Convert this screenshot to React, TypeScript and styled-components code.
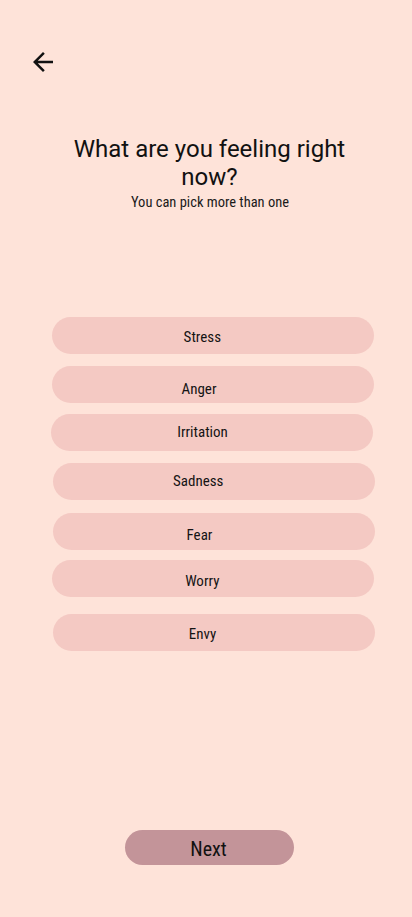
import React from "react";
import styled, { createGlobalStyle } from "styled-components";

const GlobalStyle = createGlobalStyle`
  html, body {
    margin: 0;
    padding: 0;
    background: #fee3d9;
  }
  * { box-sizing: border-box; }
`;

const condensed = `"Roboto Condensed", "Liberation Sans Narrow", "DejaVu Sans Condensed", Roboto, sans-serif`;

const Page = styled.div`
  width: 412px;
  height: 917px;
  background: #fee3d9;
  display: flex;
  flex-direction: column;
  font-family: Roboto, "Liberation Sans", sans-serif;
  color: #111;
  overflow: hidden;
`;

const TopBar = styled.div`
  padding: 47px 0 0 28px;
  height: 77px;
`;

const BackButton = styled.button`
  width: 30px;
  height: 30px;
  padding: 0;
  border: none;
  background: transparent;
  display: flex;
  cursor: pointer;
  svg { display: block; }
`;

const Title = styled.h1`
  margin: 58px 0 0;
  padding: 0 60px 0 67px;
  font-size: 24px;
  line-height: 28px;
  font-weight: 400;
  text-align: center;
  color: #111;
`;

const Subtitle = styled.p`
  margin: 4px 0 0;
  padding-left: 8px;
  font-family: ${condensed};
  font-size: 14.5px;
  line-height: 16px;
  text-align: center;
  color: #1a1a1a;
`;

const OptionList = styled.div`
  margin-top: 106px;
  padding-left: 52px;
  display: flex;
  flex-direction: column;
  align-items: flex-start;
`;

const Option = styled.button<{ $gap: number; $x: number }>`
  margin-top: ${(p) => p.$gap}px;
  margin-left: ${(p) => p.$x}px;
  width: 322px;
  height: 37px;
  border: none;
  border-radius: 19px;
  background: #f4c9c3;
  display: flex;
  align-items: center;
  justify-content: center;
  padding: 0;
  font-family: ${condensed};
  font-size: 15px;
  color: #141414;
  cursor: pointer;
`;

const Label = styled.span<{ $dx: number; $dy: number }>`
  display: block;
  transform: translate(${(p) => p.$dx}px, ${(p) => p.$dy}px);
`;

const Spacer = styled.div`
  flex: 1;
`;

const Footer = styled.div`
  display: flex;
  justify-content: flex-start;
  padding: 0 0 52px 125px;
`;

const NextButton = styled.button`
  width: 169px;
  height: 35px;
  border: none;
  border-radius: 18px;
  background: #c39499;
  font-family: ${condensed};
  font-size: 20px;
  color: #111;
  display: flex;
  align-items: center;
  justify-content: center;
  padding: 2px 2px 0 0;
  cursor: pointer;
`;

const options = [
  { label: "Stress", gap: 0, x: 0, dx: -10.7, dy: 1.2 },
  { label: "Anger", gap: 12, x: 0, dx: -14, dy: 3.7 },
  { label: "Irritation", gap: 11, x: -1, dx: -9.5, dy: -0.8 },
  { label: "Sadness", gap: 12, x: 1, dx: -15.8, dy: -1.3 },
  { label: "Fear", gap: 13, x: 1, dx: -14.5, dy: 2.7 },
  { label: "Worry", gap: 10, x: 0, dx: -10.7, dy: 2.2 },
  { label: "Envy", gap: 17, x: 1, dx: -11.5, dy: 0.7 },
];

export default function App() {
  return (
    <>
      <GlobalStyle />
      <Page>
        <TopBar>
          <BackButton aria-label="Back">
            <svg width="30" height="30" viewBox="0 0 24 24" fill="#111">
              <path d="M20 11H7.83l5.59-5.59L12 4l-8 8 8 8 1.41-1.41L7.83 13H20v-2z" />
            </svg>
          </BackButton>
        </TopBar>
        <Title>What are you feeling right now?</Title>
        <Subtitle>You can pick more than one</Subtitle>
        <OptionList>
          {options.map((o) => (
            <Option key={o.label} $gap={o.gap} $x={o.x}>
              <Label $dx={o.dx} $dy={o.dy}>{o.label}</Label>
            </Option>
          ))}
        </OptionList>
        <Spacer />
        <Footer>
          <NextButton>Next</NextButton>
        </Footer>
      </Page>
    </>
  );
}
